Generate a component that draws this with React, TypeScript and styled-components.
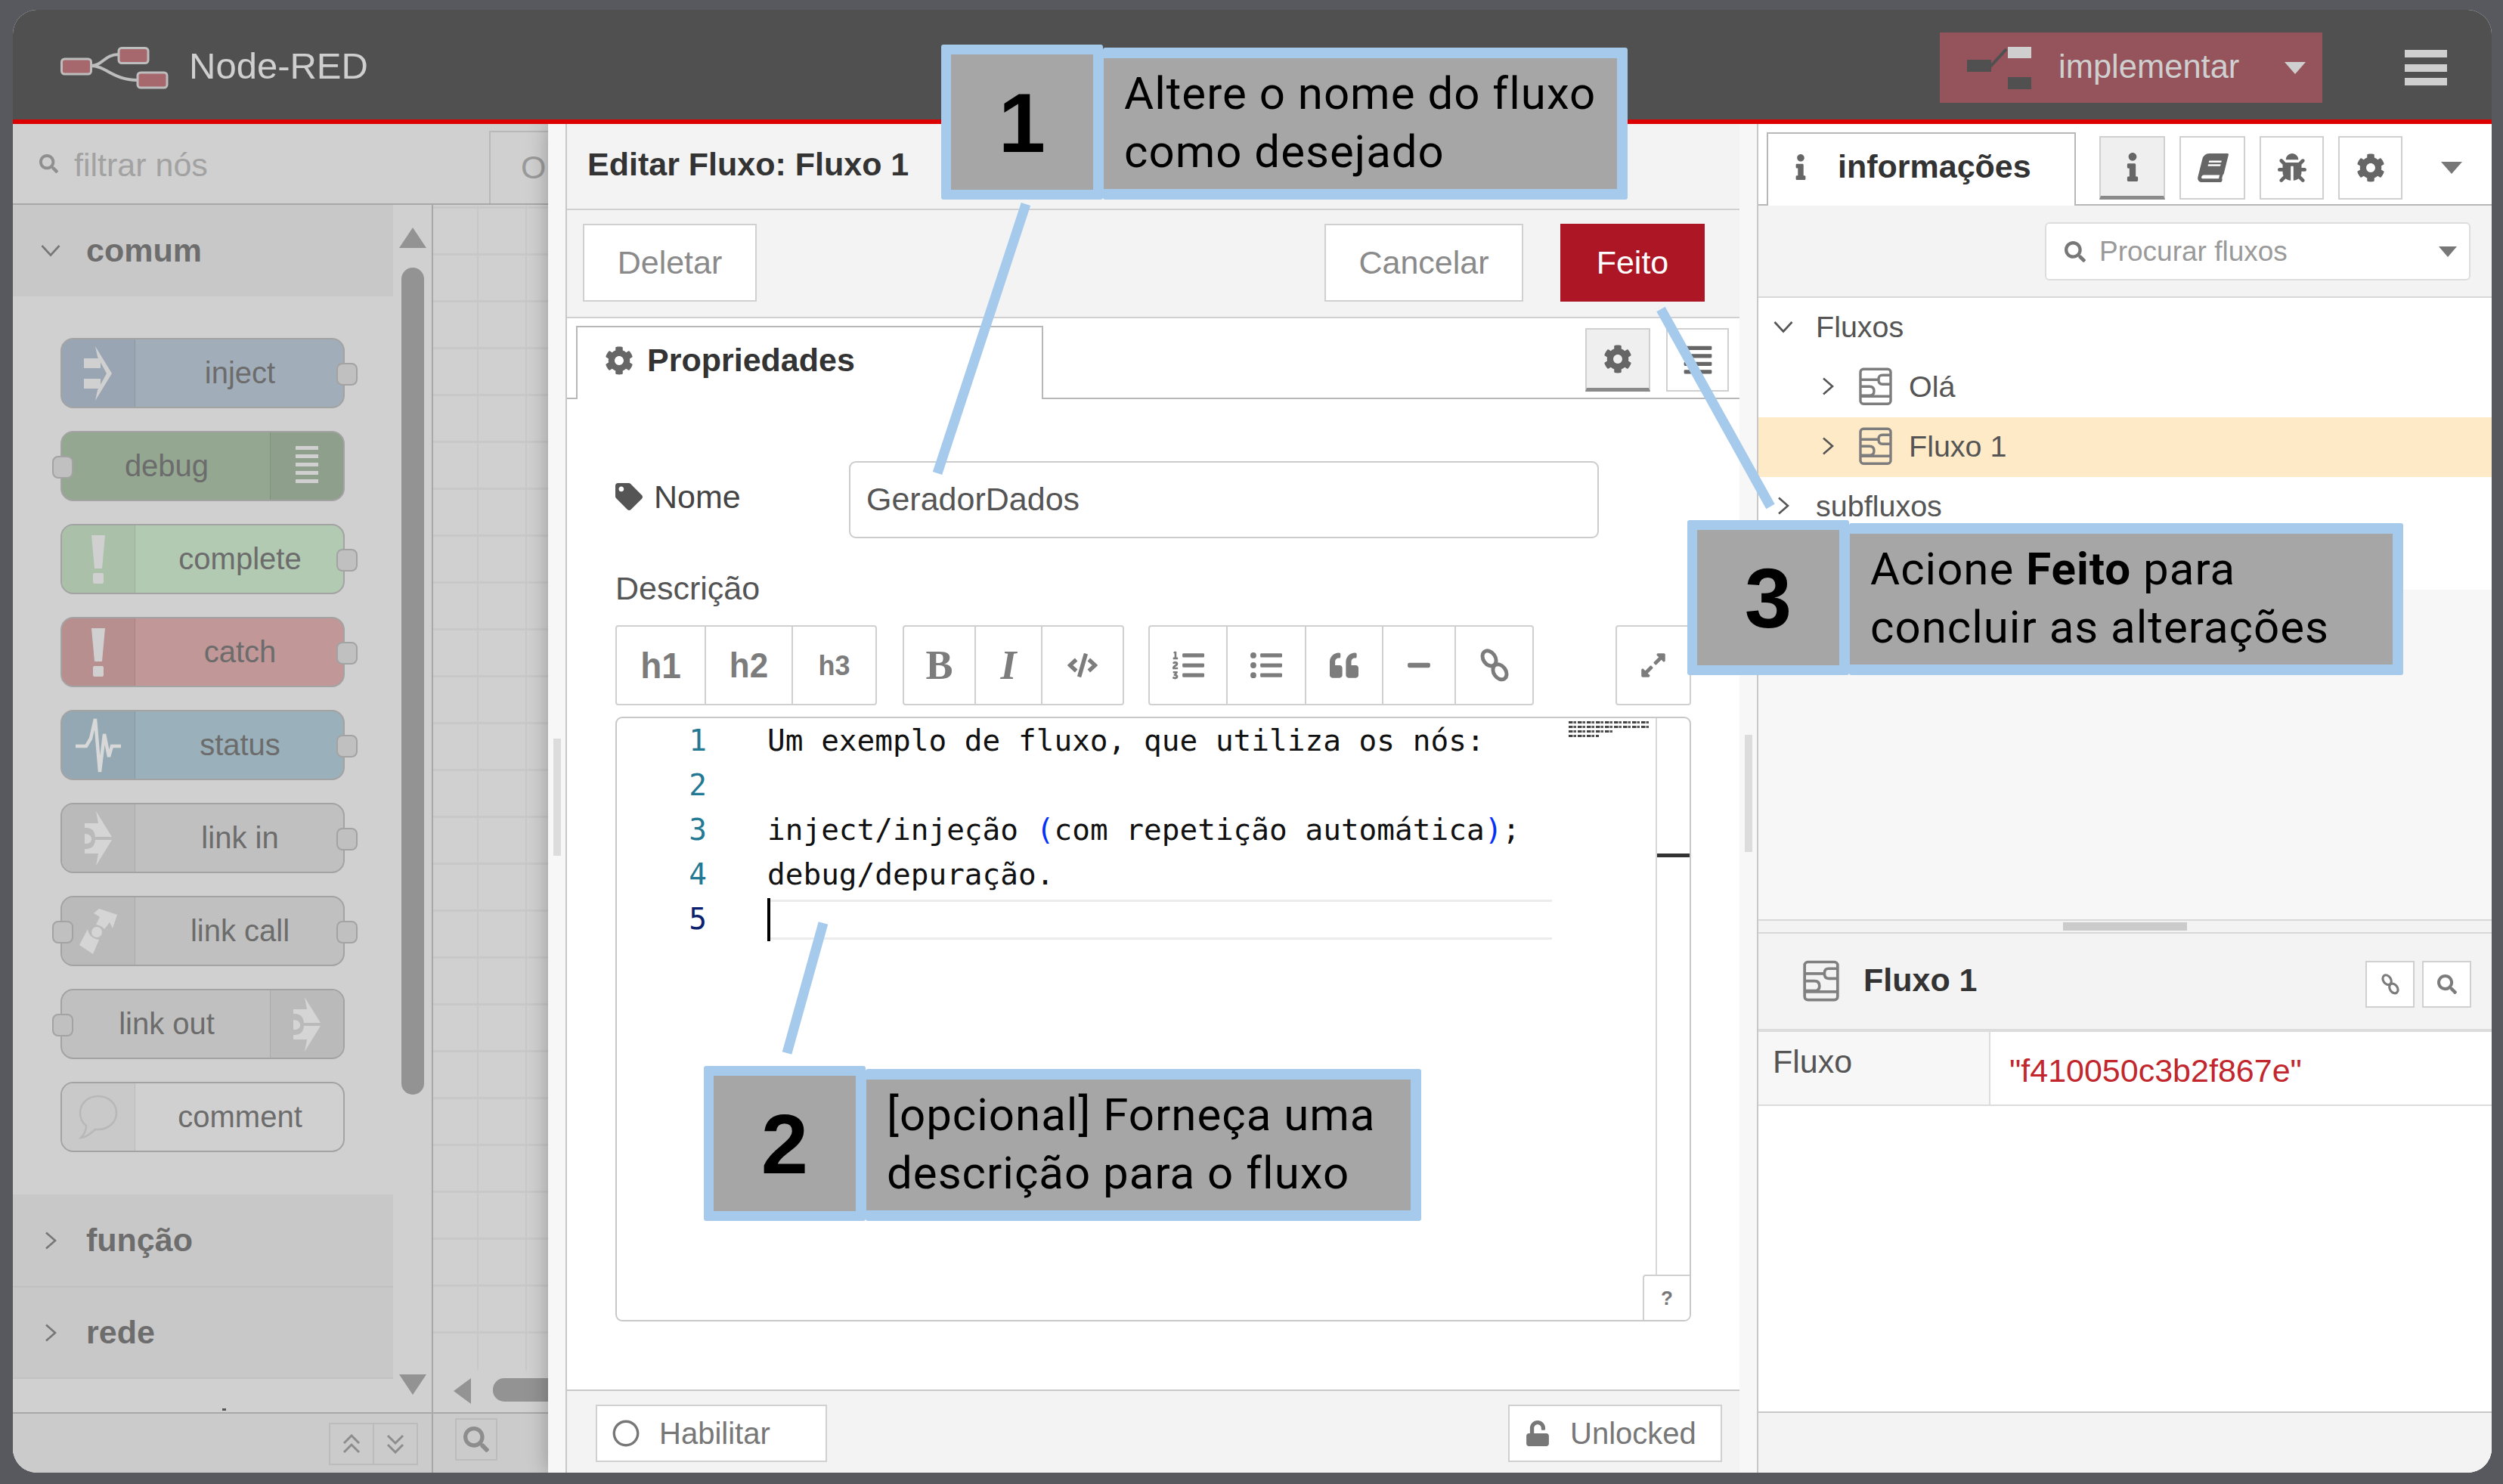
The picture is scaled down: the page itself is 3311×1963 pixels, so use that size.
import React from 'react'
import styled, { createGlobalStyle } from 'styled-components'
import {
  FaCog, FaTag, FaInfo, FaBook, FaBug, FaAlignJustify, FaSearch, FaListOl, FaListUl, FaQuoteLeft,
  FaMinus, FaExpandAlt, FaCode, FaRegCircle, FaUnlock,
} from 'react-icons/fa'

const GlobalStyle = createGlobalStyle`
  html, body { margin: 0; padding: 0; overflow: hidden; background: #58595e; }
  * { box-sizing: border-box; }
  body { font-family: "Liberation Sans", Arial, sans-serif; font-size: 43px; }
`

/* drawings */

const Logo = () => (
  <svg width="143" height="56" viewBox="0 0 143 56">
    <path d="M40 25 C56 25 58 10 77 10 M40 25 C60 25 70 44 101 44" fill="none" stroke="#bdbdbd" strokeWidth="4" />
    <rect x="1.5" y="16" width="39" height="20" rx="4" fill="#a7686d" stroke="#bdbdbd" strokeWidth="3" />
    <rect x="77" y="1.5" width="39" height="20" rx="4" fill="#a7686d" stroke="#bdbdbd" strokeWidth="3" />
    <rect x="102" y="34" width="39" height="20" rx="4" fill="#a7686d" stroke="#bdbdbd" strokeWidth="3" />
  </svg>
)

const DeployIcon = () => (
  <svg width="85" height="56" viewBox="0 0 85 56" style={{ flex: 'none' }}>
    <rect x="0" y="17" width="32" height="16" fill="#505050" />
    <path d="M30 27 L52 3" stroke="#505050" strokeWidth="4" fill="none" />
    <rect x="54" y="0" width="31" height="15" fill="#cfcfcf" />
    <rect x="54" y="40" width="31" height="16" fill="#505050" />
  </svg>
)

const FlowIcon = ({ size = 44, color = '#7d7d7d' }: { size?: number; color?: string }) => (
  <svg width={size} height={size * 1.15} viewBox="0 0 44 50" fill="none" stroke={color} strokeWidth="3.4">
    <rect x="2" y="2" width="40" height="46" rx="4" />
    <path d="M2 16 H26 M2 38 H42 M26 16 C26 11 28 10 31 10 H42 M42 22 H31 C28 22 26 20 26 16" />
    <path d="M2 25 H14 C18 25 20 27 20 31 C20 35 18 37 14 37 H2" />
  </svg>
)

const ChainIcon = ({ size = 38, color = '#7c7c7c' }: { size?: number; color?: string }) => (
  <svg width={size} height={size * 1.15} viewBox="0 0 38 44" fill="none" stroke={color} strokeWidth="5">
    <ellipse cx="12" cy="13" rx="8" ry="11" transform="rotate(-35 12 13)" />
    <ellipse cx="26" cy="31" rx="8" ry="11" transform="rotate(-35 26 31)" />
  </svg>
)

const InjectIcon = () => (
  <svg width="38" height="72" viewBox="0 0 38 72" fill="#d0d0d0">
    <rect x="0" y="16" width="22" height="13" />
    <rect x="0" y="43" width="22" height="13" />
    <path d="M15 0 L37 36 L15 72 L18 58 L30 36 L18 14 Z" />
  </svg>
)

const DebugIcon = () => (
  <svg width="30" height="54" viewBox="0 0 30 54" fill="#d0d0d0">
    {[0, 11, 22, 33, 44].map(y => <rect key={y} x="0" y={y} width="30" height="5" />)}
  </svg>
)

const AlertIcon = () => (
  <svg width="18" height="64" viewBox="0 0 18 64" fill="#d0d0d0">
    <path d="M0 0 H18 L14 44 H4 Z" />
    <rect x="2" y="50" width="14" height="14" rx="2" />
  </svg>
)

const StatusIcon = () => (
  <svg width="60" height="74" viewBox="0 0 60 74" fill="none" stroke="#d8d8d8" strokeWidth="4.5">
    <path d="M0 38 H14 L20 28 L26 2 L32 72 L38 22 L44 52 L48 38 H60" />
  </svg>
)

const LinkArrow = () => (
  <svg width="36" height="72" viewBox="0 0 36 72" fill="#d5d5d5">
    <path d="M15 0 L36 34 H14 C13 24 8 22 0 22 V16 H18 Z" />
    <path d="M0 30 C6 30 9 33 9 37 C9 41 6 43 0 43 Z" />
    <path d="M36 38 L15 72 L18 56 H0 V50 C8 50 13 48 14 38 Z" />
  </svg>
)

const LinkCallIcon = () => (
  <svg width="50" height="60" viewBox="0 0 50 60" fill="#d5d5d5">
    <path d="M26 0 L50 8 L44 26 L40 18 L33 27 C31 24 27 22 22 21 L27 11 L19 6 Z" />
    <circle cx="23" cy="31" r="7" />
    <path d="M11 27 C12 35 18 40 26 41 L18 60 L0 48 Z" />
  </svg>
)

const CommentIcon = () => (
  <svg width="52" height="60" viewBox="0 0 52 60" fill="none" stroke="#b8b8b8" strokeWidth="2.5">
    <path d="M26 2 C12 2 2 12 2 24 C2 32 6 38 10 41 C10 47 7 53 3 57 C12 56 17 50 22 46 C23 46 25 46 26 46 C40 46 50 36 50 24 C50 12 40 2 26 2 Z" />
  </svg>
)

/* page frame */

const Screen = styled.div`
  width: 3311px;
  height: 1963px;
  padding: 13px 15px 15px 17px;
  background: #58595e;
  position: relative;
  overflow: hidden;
`

const Frame = styled.div`
  width: 100%;
  height: 100%;
  border-radius: 32px;
  overflow: hidden;
  display: flex;
  flex-direction: column;
  background: #fff;
`

const Header = styled.header`
  height: 151px;
  flex: none;
  background: #505050;
  border-bottom: 6px solid #dd0000;
  display: flex;
  align-items: center;
  padding: 8px 59px 0 63px;
  position: relative;
  z-index: 3;
`

const Brand = styled.div`
  display: flex;
  align-items: center;
  gap: 27px;
  color: #cfcfcf;
  font-size: 49px;
  span { padding-bottom: 5px; }
`

const DeployButton = styled.div`
  margin-left: auto;
  width: 506px;
  height: 93px;
  background: #95545b;
  color: #cfcfcf;
  display: flex;
  align-items: center;
  padding: 0 22px 0 36px;
  font-size: 43.5px;
`

const DeployLabel = styled.span`
  margin-left: 36px;
  padding-bottom: 2px;
`

const Spacer = styled.span`
  flex: 1;
`

const Caret = styled.span<{ $color?: string; $size?: number; $ml?: number }>`
  width: 0;
  height: 0;
  flex: none;
  margin-left: ${p => p.$ml ?? 0}px;
  border-left: ${p => p.$size ?? 14}px solid transparent;
  border-right: ${p => p.$size ?? 14}px solid transparent;
  border-top: ${p => (p.$size ?? 14) + 2}px solid ${p => p.$color ?? '#cfcfcf'};
`

const MenuButton = styled.div`
  margin-left: 109px;
  width: 56px;
  height: 47px;
  display: flex;
  flex-direction: column;
  justify-content: space-between;
  span { height: 10px; background: #cfcfcf; display: block; }
`

const Body = styled.div`
  flex: 1;
  display: flex;
  min-height: 0;
`

/* left: palette and workspace */

const LeftPane = styled.div`
  width: 708px;
  flex: none;
  display: flex;
  flex-direction: column;
  background: #d0d0d0;
`

const PaletteSearch = styled.div`
  height: 107px;
  flex: none;
  border-bottom: 2px solid #a8a8a8;
  display: flex;
  align-items: center;
  padding-left: 35px;
  color: #a2a2a2;
  gap: 21px;
  font-size: 43px;
  position: relative;
  > span { padding-top: 4px; }
`

const SearchTab = styled.div`
  margin-left: auto;
  align-self: flex-end;
  width: 78px;
  height: 96px;
  border-top: 2px solid #b8b8b8;
  border-left: 2px solid #b8b8b8;
  color: #9a9a9a;
  padding-left: 40px;
  line-height: 92px;
  overflow: hidden;
`

const MainRow = styled.div`
  flex: 1;
  min-height: 0;
  display: flex;
`

const PaletteColumn = styled.div`
  width: 556px;
  flex: none;
  display: flex;
  border-right: 2px solid #a8a8a8;
`

const Categories = styled.div`
  width: 503px;
  flex: none;
  overflow: hidden;
`

const CategoryHead = styled.div`
  height: 121px;
  background: #c8c8c8;
  display: flex;
  align-items: center;
  gap: 34px;
  padding: 0 0 0 36px;
  font-weight: bold;
  color: #6d6d6d;
  & + & { border-top: 2px solid #c0c0c0; }
`

const CategoryTail = styled.div`
  height: 44px;
  border-top: 2px solid #c2c2c2;
  position: relative;
  &::after {
    content: '';
    position: absolute;
    left: 277px;
    bottom: 0;
    width: 5px;
    height: 3px;
    background: #555;
  }
`

const ChevronBox = styled.span`
  width: 27px;
  flex: none;
  display: flex;
  justify-content: center;
`

const Chevron = ({ open, color = '#777' }: { open?: boolean; color?: string }) => (
  <ChevronBox>
    {open ? (
      <svg width="26" height="17" viewBox="0 0 26 17" fill="none" stroke={color} strokeWidth="2.6">
        <path d="M1.5 2 L13 14.5 L24.5 2" />
      </svg>
    ) : (
      <svg width="16" height="24" viewBox="0 0 16 24" fill="none" stroke={color} strokeWidth="2.6">
        <path d="M2 1.5 L14 12 L2 22.5" />
      </svg>
    )}
  </ChevronBox>
)

const NodeList = styled.div`
  padding: 55px 0 56px 63px;
  display: flex;
  flex-direction: column;
  gap: 30px;
`

const PaletteNode = styled.div<{ $bg: string; $reverse?: boolean }>`
  width: 376px;
  height: 93px;
  background: ${p => p.$bg};
  border: 2px solid #a3a3a3;
  border-radius: 17px;
  position: relative;
  display: flex;
  flex-direction: ${p => (p.$reverse ? 'row-reverse' : 'row')};
  color: #6c6c6c;
  font-size: 40px;
`

const NodeIconBox = styled.div<{ $bg: string; $reverse?: boolean }>`
  width: 97px;
  flex: none;
  background: ${p => p.$bg};
  border-radius: ${p => (p.$reverse ? '0 15px 15px 0' : '15px 0 0 15px')};
  ${p => (p.$reverse ? 'border-left' : 'border-right')}: 1px solid rgba(0, 0, 0, 0.08);
  display: flex;
  align-items: center;
  justify-content: center;
`

const NodeLabel = styled.div`
  flex: 1;
  text-align: center;
  line-height: 88px;
  padding-left: 2px;
`

const Port = styled.span<{ $side: 'left' | 'right' }>`
  position: absolute;
  top: 31px;
  ${p => (p.$side === 'left' ? 'left: -13px;' : 'right: -19px;')}
  width: 28px;
  height: 30px;
  background: #c0c0c0;
  border: 2px solid #a3a3a3;
  border-radius: 8px;
`

const ScrollColumn = styled.div`
  flex: 1;
  display: flex;
  flex-direction: column;
  align-items: center;
  padding-top: 30px;
`

const ArrowV = styled.span<{ $down?: boolean }>`
  width: 0;
  height: 0;
  border-left: 18px solid transparent;
  border-right: 18px solid transparent;
  ${p => (p.$down ? 'border-top' : 'border-bottom')}: 27px solid #939393;
`

const ThumbV = styled.div`
  width: 30px;
  height: 1094px;
  margin: 26px 0 370px;
  border-radius: 15px;
  background: #939393;
`

const Workspace = styled.div`
  flex: 1;
  display: flex;
  flex-direction: column;
  min-width: 0;
`

const Grid = styled.div`
  flex: 1;
  background-color: #d0d0d0;
  background-image:
    linear-gradient(#c8c8c8 3px, transparent 3px),
    linear-gradient(90deg, #c8c8c8 2px, transparent 2px);
  background-size: 64px 62px;
  background-position: 58px 2px;
`

const ScrollH = styled.div`
  height: 55px;
  flex: none;
  display: flex;
  align-items: flex-start;
  padding: 10px 0 0 27px;
  gap: 29px;
`

const ArrowLeft = styled.span`
  width: 0;
  height: 0;
  border-top: 17px solid transparent;
  border-bottom: 17px solid transparent;
  border-right: 23px solid #939393;
`

const ThumbH = styled.div`
  flex: 1;
  height: 31px;
  border-radius: 15px 0 0 15px;
  background: #939393;
`

const LeftFooter = styled.div`
  height: 80px;
  flex: none;
  border-top: 2px solid #a8a8a8;
  background: #cbcbcb;
  display: flex;
`

const FooterPalette = styled.div`
  width: 556px;
  flex: none;
  border-right: 2px solid #a8a8a8;
  display: flex;
  justify-content: flex-end;
  padding: 12px 18px 0 0;
`

const FooterSearch = styled.div`
  padding: 6px 0 0 31px;
`

const MiniButton = styled.div<{ $w: number; $h?: number }>`
  width: ${p => p.$w}px;
  height: ${p => p.$h ?? 56}px;
  border: 2px solid #bcbcbc;
  margin-left: -2px;
  display: flex;
  align-items: center;
  justify-content: center;
  color: #8d8d8d;
`

const DoubleChevron = ({ up }: { up?: boolean }) => (
  <svg width="24" height="26" viewBox="0 0 24 26" fill="none" stroke="#8d8d8d" strokeWidth="3">
    <path d={up ? 'M2 12 L12 2 L22 12 M2 24 L12 14 L22 24' : 'M2 2 L12 12 L22 2 M2 14 L12 24 L22 14'} />
  </svg>
)

/* editor tray */

const Tray = styled.div`
  width: 1576px;
  flex: none;
  display: flex;
  position: relative;
  z-index: 1;
  box-shadow: 0 0 26px rgba(0, 0, 0, 0.28);
`

const Grip = styled.div<{ $w: number; $offset: number }>`
  width: ${p => p.$w}px;
  flex: none;
  background: #f7f7f7;
  border-right: 2px solid #c8c8c8;
  position: relative;
  z-index: 2;
  &::after {
    content: '';
    position: absolute;
    top: ${p => p.$offset}px;
    left: 7px;
    width: 10px;
    height: 155px;
    background: #dcdcdc;
  }
`

const TrayContent = styled.div`
  flex: 1;
  min-width: 0;
  display: flex;
  flex-direction: column;
  background: #fff;
`

const TrayTitle = styled.div`
  height: 114px;
  flex: none;
  background: #f3f3f3;
  border-bottom: 2px solid #d0d0d0;
  padding: 29px 0 0 27px;
  font-weight: bold;
  color: #333;
`

const TrayActions = styled.div`
  height: 143px;
  flex: none;
  background: #f3f3f3;
  border-bottom: 2px solid #d0d0d0;
  display: flex;
  align-items: flex-start;
  padding: 18px 46px 0 21px;
`

const Button = styled.div<{ $w: number; $h?: number; $primary?: boolean; $ml?: string }>`
  width: ${p => p.$w}px;
  height: ${p => p.$h ?? 103}px;
  margin-left: ${p => p.$ml ?? '0'};
  flex: none;
  background: ${p => (p.$primary ? '#ad1625' : '#fff')};
  color: ${p => (p.$primary ? '#fff' : '#8a8a8a')};
  border: 2px solid ${p => (p.$primary ? '#ad1625' : '#d0d0d0')};
  display: flex;
  align-items: center;
  justify-content: center;
  gap: 26px;
`

const TabBar = styled.div<{ $h: number }>`
  height: ${p => p.$h}px;
  flex: none;
  border-bottom: 2px solid #b8b8b8;
  display: flex;
  align-items: flex-end;
  position: relative;
`

const Tab = styled.div<{ $w: number; $h: number; $ml: number; $pl: number; $gap: number }>`
  width: ${p => p.$w}px;
  height: ${p => p.$h}px;
  margin-left: ${p => p.$ml}px;
  margin-bottom: -2px;
  padding: 0 0 8px ${p => p.$pl}px;
  gap: ${p => p.$gap}px;
  background: #fff;
  border: 2px solid #b8b8b8;
  border-bottom: none;
  display: flex;
  align-items: center;
  font-weight: bold;
  color: #333;
  svg { color: #666; flex: none; }
`

const IconTab = styled.div<{ $w: number; $active?: boolean }>`
  width: ${p => p.$w}px;
  height: 84px;
  flex: none;
  background: ${p => (p.$active ? '#efefef' : '#fff')};
  border: 2px solid #d0d0d0;
  ${p => (p.$active ? 'border-bottom: 5px solid #8a8a8a;' : '')}
  display: flex;
  align-items: center;
  justify-content: center;
  color: #666;
`

const BookIcon = styled(FaBook)`
  transform: skewX(-14deg);
`

const TabIcons = styled.div<{ $bottom: number; $right: number; $gap: number }>`
  position: absolute;
  right: ${p => p.$right}px;
  bottom: ${p => p.$bottom}px;
  display: flex;
  align-items: center;
  gap: ${p => p.$gap}px;
`

const Form = styled.div`
  flex: 1;
  min-height: 0;
  padding: 82px 64px 0 64px;
  color: #555;
`

const NameRow = styled.div`
  display: flex;
  align-items: center;
  height: 102px;
`

const NameLabel = styled.label`
  width: 309px;
  flex: none;
  display: flex;
  align-items: center;
  gap: 15px;
  padding-bottom: 8px;
  color: #444;
  svg { color: #555; }
`

const NameInput = styled.div`
  width: 992px;
  height: 102px;
  border: 2px solid #ccc;
  border-radius: 9px;
  padding-left: 21px;
  line-height: 96px;
  color: #555;
`

const DescLabel = styled.div`
  height: 115px;
  padding-top: 42px;
  color: #555;
`

const Toolbar = styled.div`
  display: flex;
  height: 106px;
`

const ToolGroup = styled.div<{ $ml: number }>`
  display: flex;
  margin-left: ${p => p.$ml}px;
  border: 2px solid #d0d0d0;
  border-radius: 4px;
`

const ToolButton = styled.div<{ $w: number }>`
  width: ${p => p.$w}px;
  display: flex;
  align-items: center;
  justify-content: center;
  color: #7c7c7c;
  font-weight: bold;
  font-size: 42px;
  & + & { border-left: 2px solid #d0d0d0; }
`

const ExpandButton = styled(ToolButton)`
  margin-left: auto;
  border: 2px solid #d0d0d0;
  border-radius: 4px;
`

const HeadingLabel = styled.span<{ $size?: number }>`
  font-size: ${p => p.$size ?? 42}px;
  transform: scaleY(1.05);
`

const SerifGlyph = styled.span<{ $italic?: boolean }>`
  font-family: "Liberation Serif", "Times New Roman", serif;
  font-size: 54px;
  font-style: ${p => (p.$italic ? 'italic' : 'normal')};
`

const Editor = styled.div`
  margin-top: 15px;
  height: 800px;
  border: 2px solid #c8c8c8;
  border-radius: 9px;
  display: flex;
  overflow: hidden;
`

const CodeArea = styled.div`
  width: 1237px;
  flex: none;
`

const CodeLine = styled.div`
  height: 59px;
  display: flex;
  font-family: "DejaVu Sans Mono", "Liberation Mono", monospace;
  font-size: 39.4px;
  line-height: 58px;
  color: #111;
  white-space: pre;
  position: relative;
`

const LineNumber = styled.span<{ $current?: boolean }>`
  width: 199px;
  flex: none;
  padding-right: 80px;
  text-align: right;
  color: ${p => (p.$current ? '#0b216f' : '#237893')};
`

const LineText = styled.span<{ $current?: boolean }>`
  flex: 1;
  ${p => (p.$current ? 'border-top: 3px solid #ececec; border-bottom: 3px solid #ececec; margin: 4px 0 2px;' : '')}
`

const Paren = styled.span`
  color: #0431fa;
`

const Cursor = styled.span`
  position: absolute;
  left: 199px;
  top: 2px;
  width: 4px;
  height: 57px;
  background: #000;
`

const Minimap = styled.div`
  width: 137px;
  flex: none;
  padding: 4px 6px 0 22px;
  display: flex;
  flex-direction: column;
  gap: 3px;
`

const MiniLine = styled.span<{ $w: number }>`
  display: block;
  height: 3px;
  width: ${p => p.$w}px;
  background: repeating-linear-gradient(90deg, #444 0 5px, #aaa 5px 7px, #555 7px 10px, transparent 10px 12px);
`

const Overview = styled.div`
  flex: 1;
  border-left: 2px solid #d8d8d8;
  position: relative;
`

const OverviewMark = styled.span`
  position: absolute;
  top: 179px;
  left: 0;
  right: 0;
  height: 5px;
  background: #333;
`

const HelpButton = styled.div`
  position: absolute;
  right: 0;
  bottom: 0;
  width: 62px;
  height: 60px;
  border: 2px solid #d0d0d0;
  border-bottom: none;
  border-right: none;
  border-radius: 4px 0 0 0;
  background: #fff;
  display: flex;
  align-items: center;
  justify-content: center;
  font-size: 26px;
  font-weight: bold;
  color: #777;
`

const TrayFooter = styled.div`
  height: 110px;
  flex: none;
  background: #f3f3f3;
  border-top: 2px solid #c8c8c8;
  display: flex;
  align-items: flex-start;
  justify-content: space-between;
  padding: 18px 23px 0 38px;
`

const FooterButton = styled(Button)`
  color: #777;
  justify-content: flex-start;
  padding-left: 20px;
  font-size: 40px;
  svg { flex: none; }
`

/* right sidebar */

const Sidebar = styled.div`
  flex: 1;
  min-width: 0;
  display: flex;
  flex-direction: column;
  background: #fff;
  position: relative;
  z-index: 2;
`

const SearchBar = styled.div`
  height: 122px;
  flex: none;
  background: #f3f3f3;
  border-bottom: 2px solid #d8d8d8;
  display: flex;
  justify-content: flex-end;
  padding: 22px 28px 0 0;
`

const FlowSearch = styled.div`
  width: 563px;
  height: 77px;
  background: #fff;
  border: 2px solid #ddd;
  border-radius: 6px;
  display: flex;
  align-items: center;
  padding: 0 16px 0 24px;
  gap: 18px;
  font-size: 37px;
  color: #9a9a9a;
  svg { color: #777; }
`

const Tree = styled.div`
  height: 386px;
  flex: none;
  background: #fff;
`

const TreeRow = styled.div<{ $selected?: boolean; $indent: number }>`
  height: 79px;
  background: ${p => (p.$selected ? '#ffeac7' : 'transparent')};
  display: flex;
  align-items: center;
  padding: 0 0 3px ${p => p.$indent}px;
  color: #555;
  font-size: 39.5px;
`

const TreeLabel = styled.span<{ $ml: number }>`
  margin-left: ${p => p.$ml}px;
  display: flex;
`

const EmptyArea = styled.div`
  height: 436px;
  flex: none;
  background: #f7f7f7;
`

const Splitter = styled.div`
  height: 19px;
  flex: none;
  background: #f3f3f3;
  border-top: 2px solid #d8d8d8;
  border-bottom: 2px solid #d8d8d8;
  display: flex;
  justify-content: center;
  align-items: center;
  span { display: block; width: 164px; height: 11px; background: #cbcbcb; }
`

const InfoHead = styled.div`
  height: 130px;
  flex: none;
  background: #f3f3f3;
  border-bottom: 4px solid #dcdcdc;
  display: flex;
  align-items: center;
  padding: 0 27px 0 59px;
  gap: 32px;
  font-weight: bold;
  color: #333;
`

const InfoHeadTitle = styled.span`
  font-size: 43px;
  padding-bottom: 4px;
`

const InfoActions = styled.div`
  margin-left: auto;
  display: flex;
  gap: 10px;
  padding-top: 8px;
  svg { color: #7c7c7c; }
`

const InfoRow = styled.div`
  display: grid;
  grid-template-columns: 307px 1fr;
  height: 98px;
  flex: none;
  border-bottom: 2px solid #dcdcdc;
`

const InfoKey = styled.div`
  background: #f7f7f7;
  border-right: 2px solid #dcdcdc;
  padding: 15px 0 0 19px;
  color: #555;
`

const InfoValue = styled.div`
  padding: 27px 0 0 25px;
  color: #c1272d;
`

const SidebarSpace = styled.div`
  flex: 1;
  background: #fff;
`

const SidebarFooter = styled.div`
  height: 81px;
  flex: none;
  background: #f3f3f3;
  border-top: 2px solid #c8c8c8;
`

/* callouts */

const Leaders = styled.svg`
  position: absolute;
  inset: 0;
  z-index: 5;
  pointer-events: none;
`

const Callout = styled.div<{ $x: number; $y: number }>`
  position: absolute;
  left: ${p => p.$x}px;
  top: ${p => p.$y}px;
  z-index: 6;
  display: flex;
  align-items: flex-end;
`

const CalloutNumber = styled.div`
  width: 214px;
  height: 205px;
  background: #a6a6a6;
  border: 13px solid #a6caec;
  border-radius: 3px;
  display: flex;
  align-items: center;
  justify-content: center;
  padding-top: 2px;
  font-weight: bold;
  font-size: 112px;
  color: #000;
`

const CalloutText = styled.div<{ $w: number }>`
  width: ${p => p.$w}px;
  height: 201px;
  background: #a6a6a6;
  border: 14px solid #a6caec;
  border-left: 1px solid #a6caec;
  border-radius: 3px;
  padding: 0 0 4px 27px;
  font-family: Roboto, "Noto Sans", sans-serif;
  font-size: 60px;
  line-height: 77px;
  letter-spacing: 1px;
  color: #000;
  display: flex;
  flex-direction: column;
  justify-content: center;
`

type PaletteItem = {
  label: string
  bg: string
  iconBg: string
  icon: React.ReactNode
  reverse?: boolean
  inPort?: boolean
  outPort?: boolean
}

const nodes: PaletteItem[] = [
  { label: 'inject', bg: '#a2adba', iconBg: '#9aa5b3', icon: <InjectIcon />, outPort: true },
  { label: 'debug', bg: '#94a791', iconBg: '#8e9f8b', icon: <DebugIcon />, reverse: true, inPort: true },
  { label: 'complete', bg: '#b2c9b2', iconBg: '#aac0a9', icon: <AlertIcon />, outPort: true },
  { label: 'catch', bg: '#c19797', iconBg: '#b88f8f', icon: <AlertIcon />, outPort: true },
  { label: 'status', bg: '#9ab0ba', iconBg: '#93a8b2', icon: <StatusIcon />, outPort: true },
  { label: 'link in', bg: '#c0c0c0', iconBg: '#bababa', icon: <LinkArrow />, outPort: true },
  { label: 'link call', bg: '#c0c0c0', iconBg: '#bababa', icon: <LinkCallIcon />, inPort: true, outPort: true },
  { label: 'link out', bg: '#c0c0c0', iconBg: '#bababa', icon: <LinkArrow />, reverse: true, inPort: true },
  { label: 'comment', bg: '#d0d0d0', iconBg: '#c9c9c9', icon: <CommentIcon /> },
]

export default function App() {
  return (
    <Screen>
      <GlobalStyle />
      <Frame>
        <Header>
          <Brand>
            <Logo />
            <span>Node-RED</span>
          </Brand>
          <DeployButton>
            <DeployIcon />
            <DeployLabel>implementar</DeployLabel>
            <Spacer />
            <Caret />
          </DeployButton>
          <MenuButton><span /><span /><span /></MenuButton>
        </Header>

        <Body>
          <LeftPane>
            <PaletteSearch>
              <FaSearch size={25} color="#8f8f8f" />
              <span>filtrar nós</span>
              <SearchTab>O</SearchTab>
            </PaletteSearch>
            <MainRow>
              <PaletteColumn>
                <Categories>
                  <CategoryHead><Chevron open /><span>comum</span></CategoryHead>
                  <NodeList>
                    {nodes.map(n => (
                      <PaletteNode key={n.label} $bg={n.bg} $reverse={n.reverse}>
                        <NodeIconBox $bg={n.iconBg} $reverse={n.reverse}>{n.icon}</NodeIconBox>
                        <NodeLabel>{n.label}</NodeLabel>
                        {n.inPort && <Port $side="left" />}
                        {n.outPort && <Port $side="right" />}
                      </PaletteNode>
                    ))}
                  </NodeList>
                  <CategoryHead><Chevron /><span>função</span></CategoryHead>
                  <CategoryHead><Chevron /><span>rede</span></CategoryHead>
                  <CategoryTail />
                </Categories>
                <ScrollColumn>
                  <ArrowV />
                  <ThumbV />
                  <ArrowV $down />
                </ScrollColumn>
              </PaletteColumn>
              <Workspace>
                <Grid />
                <ScrollH><ArrowLeft /><ThumbH /></ScrollH>
              </Workspace>
            </MainRow>
            <LeftFooter>
              <FooterPalette>
                <MiniButton $w={60}><DoubleChevron up /></MiniButton>
                <MiniButton $w={60}><DoubleChevron /></MiniButton>
              </FooterPalette>
              <FooterSearch>
                <MiniButton $w={56}><FaSearch size={34} /></MiniButton>
              </FooterSearch>
            </LeftFooter>
          </LeftPane>

          <Tray>
            <Grip $w={25} $offset={813} />
            <TrayContent>
              <TrayTitle>Editar Fluxo: Fluxo 1</TrayTitle>
              <TrayActions>
                <Button $w={230}>Deletar</Button>
                <Button $w={263} $ml="auto">Cancelar</Button>
                <Button $w={191} $primary $ml="49px">Feito</Button>
              </TrayActions>
              <TabBar $h={107}>
                <Tab $w={618} $h={97} $ml={12} $pl={36} $gap={18}>
                  <FaCog size={38} />
                  <span>Propriedades</span>
                </Tab>
                <TabIcons $bottom={8} $right={14} $gap={21}>
                  <IconTab $w={86} $active><FaCog size={38} /></IconTab>
                  <IconTab $w={83}><FaAlignJustify size={42} /></IconTab>
                </TabIcons>
              </TabBar>
              <Form>
                <NameRow>
                  <NameLabel><FaTag size={36} /><span>Nome</span></NameLabel>
                  <NameInput>GeradorDados</NameInput>
                </NameRow>
                <DescLabel>Descrição</DescLabel>
                <Toolbar>
                  <ToolGroup $ml={0}>
                    <ToolButton $w={116}><HeadingLabel $size={46}>h1</HeadingLabel></ToolButton>
                    <ToolButton $w={115}><HeadingLabel $size={44}>h2</HeadingLabel></ToolButton>
                    <ToolButton $w={111}><HeadingLabel $size={36}>h3</HeadingLabel></ToolButton>
                  </ToolGroup>
                  <ToolGroup $ml={34}>
                    <ToolButton $w={93}><SerifGlyph>B</SerifGlyph></ToolButton>
                    <ToolButton $w={88}><SerifGlyph $italic>I</SerifGlyph></ToolButton>
                    <ToolButton $w={108}><FaCode size={40} /></ToolButton>
                  </ToolGroup>
                  <ToolGroup $ml={32}>
                    <ToolButton $w={101}><FaListOl size={42} /></ToolButton>
                    <ToolButton $w={104}><FaListUl size={42} /></ToolButton>
                    <ToolButton $w={102}><FaQuoteLeft size={38} /></ToolButton>
                    <ToolButton $w={96}><FaMinus size={34} /></ToolButton>
                    <ToolButton $w={103}><ChainIcon /></ToolButton>
                  </ToolGroup>
                  <ExpandButton $w={100}><FaExpandAlt size={36} /></ExpandButton>
                </Toolbar>
                <Editor>
                  <CodeArea>
                    <CodeLine><LineNumber>1</LineNumber><LineText>Um exemplo de fluxo, que utiliza os nós:</LineText></CodeLine>
                    <CodeLine><LineNumber>2</LineNumber><LineText /></CodeLine>
                    <CodeLine>
                      <LineNumber>3</LineNumber>
                      <LineText>inject/injeção <Paren>(</Paren>com repetição automática<Paren>)</Paren>;</LineText>
                    </CodeLine>
                    <CodeLine><LineNumber>4</LineNumber><LineText>debug/depuração.</LineText></CodeLine>
                    <CodeLine>
                      <LineNumber $current>5</LineNumber>
                      <LineText $current />
                      <Cursor />
                    </CodeLine>
                  </CodeArea>
                  <Minimap>
                    <MiniLine $w={108} />
                    <MiniLine $w={108} />
                    <MiniLine $w={60} />
                    <MiniLine $w={40} />
                  </Minimap>
                  <Overview>
                    <OverviewMark />
                    <HelpButton>?</HelpButton>
                  </Overview>
                </Editor>
              </Form>
              <TrayFooter>
                <FooterButton $w={306} $h={76}><FaRegCircle size={36} /><span>Habilitar</span></FooterButton>
                <FooterButton $w={283} $h={76}><FaUnlock size={34} /><span>Unlocked</span></FooterButton>
              </TrayFooter>
            </TrayContent>
          </Tray>

          <Grip $w={25} $offset={808} />

          <Sidebar>
            <TabBar $h={108}>
              <Tab $w={409} $h={97} $ml={11} $pl={26} $gap={32}>
                <FaInfo size={34} />
                <span>informações</span>
              </Tab>
              <TabIcons $bottom={6} $right={39} $gap={19}>
                <IconTab $w={87} $active><FaInfo size={38} /></IconTab>
                <IconTab $w={87}><BookIcon size={38} /></IconTab>
                <IconTab $w={85}><FaBug size={38} /></IconTab>
                <IconTab $w={85}><FaCog size={38} /></IconTab>
                <Caret $color="#777" $ml={32} />
              </TabIcons>
            </TabBar>
            <SearchBar>
              <FlowSearch>
                <FaSearch size={28} />
                <span>Procurar fluxos</span>
                <Spacer />
                <Caret $color="#777" $size={12} />
              </FlowSearch>
            </SearchBar>
            <Tree>
              <TreeRow $indent={19}><Chevron open color="#555" /><TreeLabel $ml={30}>Fluxos</TreeLabel></TreeRow>
              <TreeRow $indent={78}><Chevron color="#555" /><TreeLabel $ml={28}><FlowIcon /></TreeLabel><TreeLabel $ml={22}>Olá</TreeLabel></TreeRow>
              <TreeRow $indent={78} $selected><Chevron color="#555" /><TreeLabel $ml={28}><FlowIcon /></TreeLabel><TreeLabel $ml={22}>Fluxo 1</TreeLabel></TreeRow>
              <TreeRow $indent={19}><Chevron color="#555" /><TreeLabel $ml={30}>subfluxos</TreeLabel></TreeRow>
            </Tree>
            <EmptyArea />
            <Splitter><span /></Splitter>
            <InfoHead>
              <FlowIcon size={48} color="#808080" />
              <InfoHeadTitle>Fluxo 1</InfoHeadTitle>
              <InfoActions>
                <Button $w={65} $h={62}><ChainIcon size={24} /></Button>
                <Button $w={65} $h={62}><FaSearch size={26} /></Button>
              </InfoActions>
            </InfoHead>
            <InfoRow>
              <InfoKey>Fluxo</InfoKey>
              <InfoValue>"f410050c3b2f867e"</InfoValue>
            </InfoRow>
            <SidebarSpace />
            <SidebarFooter />
          </Sidebar>
        </Body>
      </Frame>

      <Leaders width="3311" height="1963" viewBox="0 0 3311 1963">
        <path d="M1357 270 L1240 626 M2197 409 L2342 670 M1089 1221 L1041 1393" stroke="#a6caec" strokeWidth="13" fill="none" />
      </Leaders>

      <Callout $x={1245} $y={59}>
        <CalloutNumber>1</CalloutNumber>
        <CalloutText $w={694}>
          <span>Altere o nome do fluxo</span>
          <span>como desejado</span>
        </CalloutText>
      </Callout>
      <Callout $x={931} $y={1410}>
        <CalloutNumber>2</CalloutNumber>
        <CalloutText $w={735}>
          <span>[opcional] Forneça uma</span>
          <span>descrição para o fluxo</span>
        </CalloutText>
      </Callout>
      <Callout $x={2232} $y={688}>
        <CalloutNumber>3</CalloutNumber>
        <CalloutText $w={733}>
          <span>Acione <b>Feito</b> para</span>
          <span>concluir as alterações</span>
        </CalloutText>
      </Callout>
    </Screen>
  )
}
